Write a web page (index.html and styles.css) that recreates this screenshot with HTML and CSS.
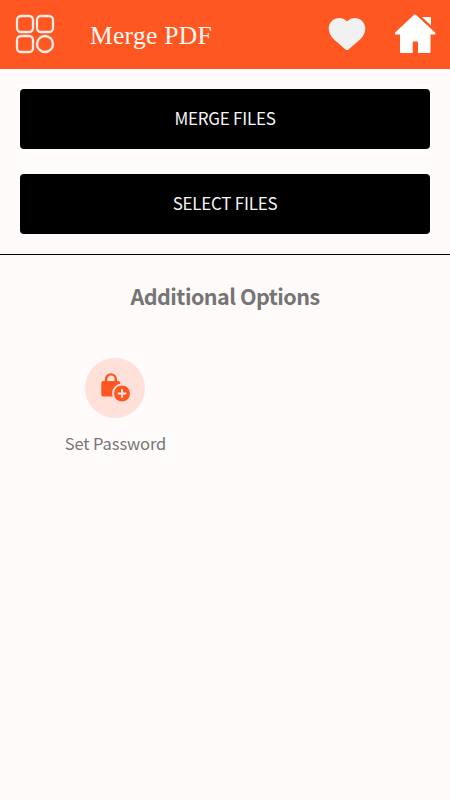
FILE: index.html
```html
<!DOCTYPE html>
<html lang="en">
<head>
<meta charset="utf-8">
<title>Merge PDF</title>
<link rel="stylesheet" href="styles.css">
</head>
<body>
<header class="bar">
  <svg class="menu" viewBox="0 0 40 40" fill="none" stroke="#f5ece8" stroke-width="2.300"><rect x="2" y="2" width="16" height="16" rx="4"/><rect x="22" y="2" width="16" height="16" rx="4"/><rect x="2" y="22" width="16" height="16" rx="4"/><circle cx="30" cy="30" r="8"/></svg>
  <h1 class="title">Merge PDF</h1>
  <svg class="heart" viewBox="0 0 38 34"><path fill="#f1f1f1" d="M19 4.500C22.300.8 26.500.300 30 1.400c4.500 1.500 7.300 5.600 7.300 10.100 0 4.500-2.300 8-5.300 11L20.500 32.400q-1.500 1.200-3 0L6 22.500C3 19.500.7 16 .7 11.500.7 7 3.500 2.900 8 1.400 11.500.300 15.700.8 19 4.500Z"/></svg>
  <svg class="home" viewBox="0 0 42 40"><path fill="#fff" d="M19.200 1.400q1.800-1.600 3.600 0L41 18.500q.8.900 0 2H36.500V38q0 1-1 1H24V28.500q0-1-1-1H19.700q-1 0-1 1V39H7q-1 0-1-1V20.500H1.500Q.4 19.300 1.200 18.500ZM28 3H36q1 0 1 1v7.500Z"/></svg>
</header>
<main>
  <section class="actions">
    <button class="btn">MERGE FILES</button>
    <button class="btn">SELECT FILES</button>
  </section>
  <section class="options">
    <h2 class="heading">Additional Options</h2>
    <div class="option">
      <div class="disc">
        <svg class="lock" viewBox="0 0 30 30"><path fill="none" stroke="#ff5722" stroke-width="2.400" d="M6 12V7.300a4.900 4.900 0 0 1 9.800 0V12"/><rect x="1.300" y="9" width="19" height="15.500" rx="2" fill="#ff5722"/><circle cx="22" cy="21.500" r="10" fill="#ffe1da"/><circle cx="22" cy="21.500" r="8" fill="#ff5722"/><path stroke="#ffe9e3" stroke-width="1.900" stroke-linecap="round" d="M18.500 21.500h7M22 18v7"/></svg>
      </div>
      <span class="label">Set Password</span>
    </div>
  </section>
</main>
</body>
</html>
```
FILE: styles.css
```css
* { box-sizing: border-box; }
body { margin: 0; min-height: 800px; background: #fffbfa; font-family: "Noto Sans CJK SC", "Open Sans", sans-serif; }
.bar { display: flex; height: 68.5px; background: #ff5722; }
.menu { width: 40px; height: 40px; margin: 14px 0 0 15px; }
.title { width: 140px; margin: 21px 0 0 35px; color: #fff8f5; font: 400 25.500px/30px "Liberation Serif", serif; letter-spacing: .3px; white-space: nowrap; }
.heart { width: 38px; height: 34px; margin: 17px 0 0 98px; }
.home { width: 42px; height: 40px; margin: 14px 0 0 28px; }
.actions { display: flex; flex-direction: column; gap: 25px; height: 186.500px; padding: 20.500px 20px 0; border-bottom: 1.500px solid #000; }
.btn { height: 60px; padding: 0 0 2px; border: 0; border-radius: 4px; background: #000; color: #f5f5f5; font: 400 17px/58px "Noto Sans CJK SC", sans-serif; letter-spacing: -.25px; }
.options { display: flex; flex-direction: column; }
.heading { margin: 25px 0 0; color: #757575; font-size: 21.500px; line-height: 32px; font-weight: 700; letter-spacing: -.52px; text-align: center; }
.option { display: flex; flex-direction: column; align-items: center; width: 130px; margin: 46px 0 0 50px; }
.disc { display: flex; width: 60px; height: 60px; padding: 13.500px 0 0 15px; border-radius: 50%; background: #ffe1da; }
.lock { width: 30px; height: 30px; }
.label { margin: 12px 0 0 1px; color: #777; font-size: 16.500px; line-height: 26px; letter-spacing: -.1px; white-space: nowrap; }
```
